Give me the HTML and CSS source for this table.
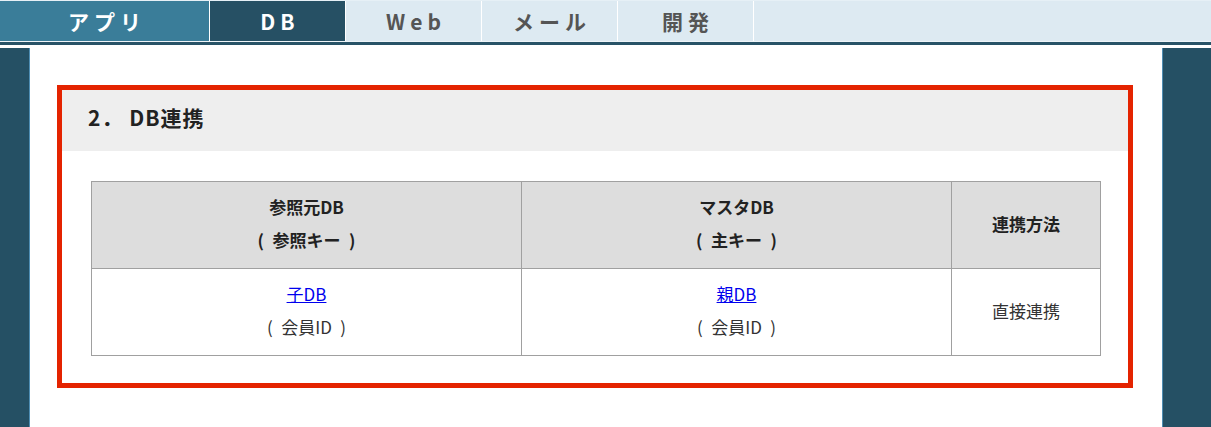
FILE: index.html
```html
<!DOCTYPE html>
<html lang="ja">
<head>
<meta charset="utf-8">
<title>DB連携</title>
<link rel="stylesheet" href="styles.css">
</head>
<body>
<nav class="tabs">
  <div class="tab tab-app">アプリ</div>
  <div class="tab tab-db">DB</div>
  <div class="tab">Web</div>
  <div class="tab">メール</div>
  <div class="tab">開発</div>
  <div class="tab-rest"></div>
</nav>
<div class="page">
  <aside class="side side-left"></aside>
  <main class="main">
    <section class="box">
      <h2 class="box-title">2．&nbsp;DB連携</h2>
      <div class="box-body">
        <table class="link-table">
          <colgroup>
            <col class="c1"><col class="c2"><col class="c3">
          </colgroup>
          <thead>
            <tr>
              <th>参照元DB<br>(&ensp;参照キー&ensp;)</th>
              <th>マスタDB<br>(&ensp;主キー&ensp;)</th>
              <th>連携方法</th>
            </tr>
          </thead>
          <tbody>
            <tr>
              <td><a href="#">子DB</a><br>(&ensp;会員ID&ensp;)</td>
              <td><a href="#">親DB</a><br>(&ensp;会員ID&ensp;)</td>
              <td>直接連携</td>
            </tr>
          </tbody>
        </table>
      </div>
    </section>
  </main>
  <aside class="side side-right"></aside>
</div>
</body>
</html>
```
FILE: styles.css
```css
* { box-sizing: border-box; }
html, body {
  margin: 0;
  padding: 0;
  background: #fff;
  font-family: "Noto Sans CJK JP", "Noto Sans", sans-serif;
}
.tabs {
  display: flex;
  height: 45px;
  background: #ddeaf2;
  border-top: 1px solid #e6f0f6;
  border-bottom: 3px solid #285367;
  box-shadow: inset 0 -1px 0 #eef4f8;
}
.tab {
  width: 136px;
  border-right: 1px solid #ffffff;
  display: flex;
  align-items: center;
  justify-content: center;
  font-size: 21px;
  font-weight: bold;
  letter-spacing: 5px;
  padding-left: 5px;
  color: #555555;
  height: 40px;
}
.tab-app {
  width: 210px;
  background: #3a7d99;
  color: #ffffff;
}
.tab-db {
  background: #265064;
  color: #ffffff;
}
.tab-rest { flex: 1; height: 40px; }
.page {
  display: flex;
  margin-top: 3px;
  min-height: calc(100vh - 48px);
}
.side { background: #255064; }
.side-left {
  width: 30px;
  border-right: 1px solid #4e8db3;
}
.side-right {
  width: 49px;
  border-left: 1px solid #4e8db3;
}
.main {
  flex: 1;
  padding: 37px 29px 0 27px;
}
.box {
  border: 5px solid #e42300;
}
.box-title {
  margin: 0;
  height: 61px;
  background: #eeeeee;
  font-size: 21px;
  line-height: 54px;
  letter-spacing: 1px;
  font-weight: bold;
  color: #222222;
  padding-left: 26px;
}
.box-body {
  padding: 30px 27px 27px 29px;
}
.link-table {
  width: 100%;
  border-collapse: collapse;
  table-layout: fixed;
  font-size: 17px;
  line-height: 33px;
  color: #333333;
}
.c1, .c2 { width: 430px; }
.link-table th, .link-table td {
  border: 1px solid #a0a0a0;
  padding: 8px 0 12px;
  text-align: center;
  vertical-align: middle;
}
.link-table th {
  background: #dddddd;
  font-weight: bold;
  color: #222222;
}
.link-table a { color: #0000ee; }
```
